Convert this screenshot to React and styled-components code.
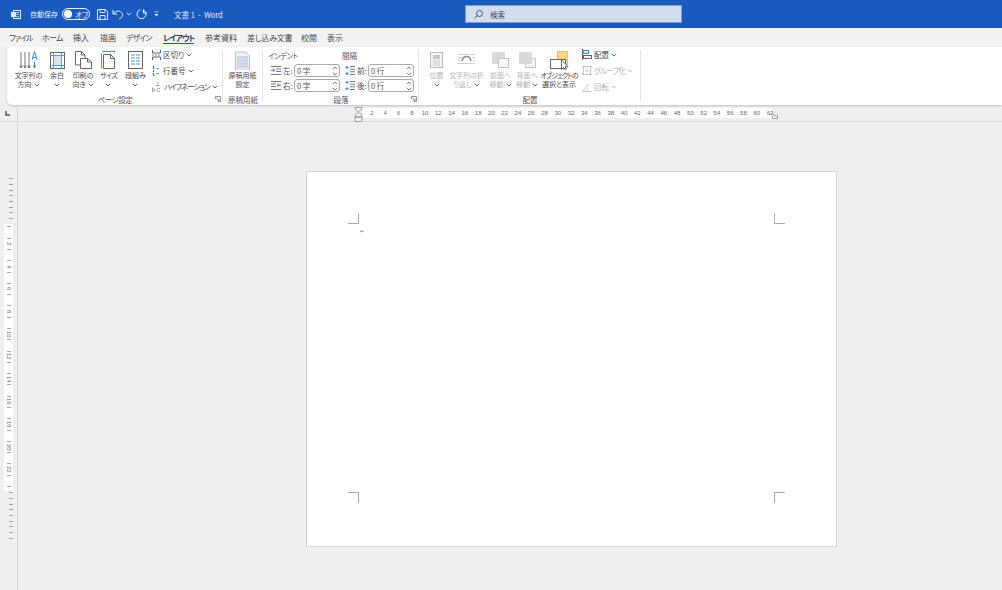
import React from "react";
import styled, { createGlobalStyle } from "styled-components";

const Global = createGlobalStyle`
  html, body { margin: 0; padding: 0; background: #efefef; }
  body {
    font-family: "Noto Sans CJK JP", "Noto Sans", sans-serif;
    font-feature-settings: "palt";
  }
  svg { display: block; }
`;

const BLUE = "#185abd";
const TABS = [
  { label: "ファイル", w: 22, ls: -1 },
  { label: "ホーム", w: 20, ls: -0.7 },
  { label: "挿入", w: 16 },
  { label: "描画", w: 15 },
  { label: "デザイン", w: 26, ls: -1 },
  { label: "レイアウト", w: 31, ls: -1, active: true },
  { label: "参考資料", w: 31 },
  { label: "差し込み文書", w: 43, ls: -0.2 },
  { label: "校閲", w: 15 },
  { label: "表示", w: 15 },
];

const Chev = ({ c = "#555" }) => (
  <svg width="6" height="4" viewBox="0 0 6 4">
    <path d="M.8.8 3 3l2.2-2.2" fill="none" stroke={c} strokeWidth=".9" />
  </svg>
);

const Ico = ({ w = 24, h = 22, children }) => (
  <svg width={w} height={h} viewBox={`0 0 ${w} ${h}`} fill="none">
    {children}
  </svg>
);

const icons = {
  direction: (
    <Ico w={19}>
      <path d="M2 4v16M.8 17.500 2 20l1.200-2.500M6 4v16M4.800 17.500 6 20l1.200-2.500M10 4v16M8.800 17.500 10 20l1.200-2.500" stroke="#666" strokeWidth=".9" />
      <path d="M13 12 15.500 3.500 18 12M14 9.500h3" stroke="#2b7cd3" strokeWidth=".9" />
      <path d="M15.500 13.500V20M14.300 17.500l1.200 2.500 1.200-2.500" stroke="#2b7cd3" strokeWidth=".9" />
    </Ico>
  ),
  margin: (
    <Ico w={15}>
      <rect x=".5" y="4.500" width="14" height="16" fill="#fff" stroke="#666" />
      <rect x="3.500" y="7.500" width="8" height="10" fill="#d4e6f7" />
      <path d="M3.500 4.500v16M11.500 4.500v16M.5 7.500h14M.5 17.500h14" stroke="#5a9fdb" />
    </Ico>
  ),
  orient: (
    <Ico w={17}>
      <path d="M.5 3.500h6l3.500 3.500v10H.5zM6.500 3.500V7H10" fill="#fff" stroke="#666" />
      <path d="M5.500 10.500h7l4 3.500v6.500h-11zM12.500 10.500V14h4" fill="#fff" stroke="#666" />
    </Ico>
  ),
  size: (
    <Ico w={15}>
      <path d="M2 3.500h12M2 2.500v2M13.500 2.500v2M.5 5.500v15" stroke="#4a94d8" />
      <path d="M2.500 6.500h7l4 4v10h-11zM9.500 6.500v4h4" fill="#fff" stroke="#666" />
    </Ico>
  ),
  columns: (
    <Ico w={15}>
      <rect x=".5" y="3.500" width="14" height="17" fill="#fff" stroke="#666" />
      <path d="M3 7h4M8 7h4M3 10h4M8 10h4M3 13h4M8 13h4M3 16h4M8 16h4" stroke="#8ab8e2" strokeWidth="1.500" />
    </Ico>
  ),
  sheet: (
    <Ico w={15}>
      <path d="M.5 4h10l4 4v14H.5z" fill="#eef3fa" stroke="#b6bfcd" />
      <rect x="2" y="8" width="11" height="12" fill="#c5d0e6" />
      <path d="M2 11h11M2 14h11M2 17h11M5 8v12M8 8v12M11 8v12" stroke="#eef3fa" strokeWidth=".5" />
    </Ico>
  ),
  position: (
    <Ico w={13}>
      <rect x=".5" y="4.500" width="12" height="15" fill="#f4f4f4" stroke="#bdbdbd" />
      <rect x="3" y="7" width="7" height="4" fill="#c6c6c6" />
      <path d="M3 13h7M3 15h7M3 17h7" stroke="#c9c9c9" />
    </Ico>
  ),
  wrap: (
    <Ico w={17}>
      <path d="M0 6.500h17M0 9.500h3M14 9.500h3M0 12.500h2M15 12.500h2M0 15.500h17" stroke="#d0d0d0" />
      <path d="M4 13c1-6 8-6 9 0" stroke="#8e8e8e" strokeWidth="1.500" />
    </Ico>
  ),
  front: (
    <Ico w={17}>
      <rect x=".5" y="4.500" width="12" height="11" fill="#d9d9d9" stroke="#d9d9d9" />
      <rect x="6.500" y="10.500" width="10" height="9" fill="#f7f7f7" stroke="#c4c4c4" />
    </Ico>
  ),
  back: (
    <Ico w={17}>
      <rect x="6.500" y="10.500" width="10" height="9" fill="#f7f7f7" stroke="#c4c4c4" />
      <rect x=".5" y="4.500" width="12" height="11" fill="#d9d9d9" stroke="#d9d9d9" />
    </Ico>
  ),
  selection: (
    <Ico w={22}>
      <rect x="9.500" y="3.500" width="10" height="13" fill="#fbd57f" stroke="#f0bf5a" />
      <rect x="2.500" y="11.500" width="15" height="9" fill="#fff" stroke="#666" />
      <path d="M13.500 12v9.500l2.200-2 1.600 2.500 1.300-.8-1.500-2.400h3z" fill="#fff" stroke="#444" strokeWidth=".8" />
    </Ico>
  ),
  breaks: (
    <Ico w={9} h={10}>
      <path d="M.5 0v3h8V0M.5 10V7h8v3" stroke="#666" />
      <path d="M0 5h9" stroke="#4a94d8" strokeDasharray="2 1" />
    </Ico>
  ),
  lines: (
    <Ico w={9} h={10}>
      <path d="M1.500 0v3M1.500 4v2M1.500 7v3" stroke="#2b7cd3" strokeWidth="1.200" />
      <path d="M4.500 2.500h2M4.500 7.500h2" stroke="#666" />
    </Ico>
  ),
  hyphen: (
    <Ico w={10} h={10}>
      <path d="M.5 9.500v-4M.5 7.500c1-1 2.500-.6 2.500 .6s-1.500 1.600-2.500 .6M8 6.500c-2-.7-3 .4-3 1.500s1.200 2 3 1.300M4 3.500h3.500M5 1h2" stroke="#888" strokeWidth=".8" />
    </Ico>
  ),
  align: (
    <Ico w={10} h={11}>
      <path d="M.5 0v11" stroke="#666" />
      <rect x="1.500" y="1.500" width="5" height="3" fill="#d4e6f7" stroke="#4a94d8" />
      <rect x="1.500" y="6.500" width="8" height="3" fill="#fff" stroke="#666" />
    </Ico>
  ),
  group: (
    <Ico w={10} h={11}>
      <rect x="1.500" y="1.500" width="7" height="8" stroke="#c4c4c4" />
      <rect x="3.500" y="3.500" width="3" height="4" fill="#e2e2e2" />
      <path d="M0 1.500h3M0 9.500h3M7 1.500h3M7 9.500h3" stroke="#bbb" />
    </Ico>
  ),
  rotate: (
    <Ico w={10} h={11}>
      <path d="M.5 10.500h9M.5 10.500 7 3" stroke="#c4c4c4" />
      <path d="M5 10c0-2 1-3 2-3" stroke="#d4d4d4" />
    </Ico>
  ),
  indentL: (
    <Ico w={10} h={9}>
      <path d="M0 .5h10M5 3h5M5 5.500h5M0 8.500h10" stroke="#777" />
      <path d="M0 4.200h3.500M2.200 2.800 3.800 4.200 2.200 5.600" stroke="#2b7cd3" />
    </Ico>
  ),
  indentR: (
    <Ico w={10} h={9}>
      <path d="M0 .5h10M0 3h5M0 5.500h5M0 8.500h10" stroke="#777" />
      <path d="M10 4.200H6.500M7.800 2.800 6.200 4.200 7.800 5.600" stroke="#2b7cd3" />
    </Ico>
  ),
  spacing: (
    <Ico w={10} h={9}>
      <path d="M5 .5h5M5 3.200h5M5 5.800h5M5 8.500h5" stroke="#777" />
      <path d="M2 .5v2.500M2 6v2.500M.5 2 2 .3 3.500 2M.5 7 2 8.700 3.500 7" stroke="#2b7cd3" />
    </Ico>
  ),
};

const Launcher = () => (
  <svg width="6" height="6" viewBox="0 0 6 6" fill="none">
    <path d="M.5 3V.5H5.500V5.500H3" stroke="#777" strokeWidth=".8" />
    <path d="M1 1.500 4 4.500M2.500 4.500H4V3" stroke="#777" strokeWidth=".8" />
  </svg>
);

const Root = styled.div`
  width: 1002px;
  height: 590px;
  overflow: hidden;
  display: flex;
  flex-direction: column;
  background: #efefef;
`;

const TitleBar = styled.header`
  height: 28px;
  flex: none;
  background: ${BLUE};
  color: #e8effa;
  display: flex;
  align-items: center;
  position: relative;
  font-size: 7px;
`;

const TitleItem = styled.div`
  flex: none;
  width: ${(p) => p.$w}px;
  margin-left: ${(p) => p.$ml || 0}px;
  display: flex;
  align-items: center;
  gap: 2px;
  white-space: pre;
  font-size: ${(p) => p.$size || 7}px;
`;

const Toggle = styled.div`
  width: 28px;
  height: 12px;
  box-sizing: border-box;
  border: 1px solid #e8effa;
  border-radius: 6px;
  display: flex;
  align-items: center;
  gap: 3px;
  padding-left: 1px;
  font-size: 7.5px;
  &::before {
    content: "";
    width: 8px;
    height: 8px;
    border-radius: 50%;
    background: #fff;
  }
`;

const Search = styled.div`
  position: absolute;
  left: 465px;
  top: 5px;
  width: 217px;
  height: 18px;
  box-sizing: border-box;
  background: #d2ddf0;
  border: 1px solid #7f9ccb;
  display: flex;
  align-items: center;
  padding-left: 8px;
  gap: 7px;
  color: #3f4c63;
  font-size: 7.5px;
`;

const TabBar = styled.nav`
  height: 19px;
  flex: none;
  background: #f3f3f3;
  display: flex;
  gap: 11px;
  padding-left: 9px;
  box-sizing: border-box;
`;

const Tab = styled.div`
  width: ${(p) => p.$w}px;
  height: 16px;
  line-height: 20px;
  white-space: nowrap;
  font-size: 8px;
  letter-spacing: ${(p) => p.$ls || 0}px;
  color: ${(p) => (p.$active ? "#2a3f63" : "#4a4a4a")};
  font-weight: ${(p) => (p.$active ? 700 : 400)};
  box-shadow: ${(p) => (p.$active ? `inset 0 -1px 0 ${BLUE}` : "none")};
`;

const Ribbon = styled.section`
  height: 58px;
  flex: none;
  margin-left: 7px;
  background: #fff;
  border-radius: 5px 0 0 5px;
  box-shadow: 0 1px 2px rgba(0, 0, 0, 0.2);
  display: flex;
  color: #555;
  font-size: 7px;
  line-height: 9px;
`;

const Group = styled.div`
  width: ${(p) => p.$w}px;
  flex: none;
  box-sizing: border-box;
  display: flex;
  flex-direction: column;
  position: relative;
  &::after {
    content: "";
    position: absolute;
    right: 0;
    top: 3px;
    bottom: 4px;
    width: 1px;
    background: #e2e2e2;
  }
`;

const GroupBody = styled.div`
  height: 47px;
  display: flex;
  padding-left: ${(p) => p.$pl || 0}px;
`;

const GroupLabel = styled.div`
  height: 11px;
  line-height: 11px;
  text-align: center;
  font-size: 7.5px;
  color: #555;
`;

const LauncherSlot = styled.div`
  position: absolute;
  right: 2px;
  bottom: 3px;
`;

const Big = styled.div`
  width: ${(p) => p.$w}px;
  flex: none;
  display: flex;
  flex-direction: column;
  align-items: center;
  text-align: center;
  white-space: nowrap;
  color: ${(p) => (p.$off ? "#b3b3b3" : "#4a4a4a")};
`;

const BigIcon = styled.div`
  height: 23px;
  margin-top: 1px;
  flex: none;
  display: flex;
  align-items: flex-start;
  justify-content: center;
`;

const BigText = styled.div`
  display: flex;
  flex-direction: column;
  align-items: center;
  font-size: 7px;
  line-height: 9px;
`;

const WithChev = styled.span`
  display: inline-flex;
  align-items: center;
  gap: 2px;
  height: 9px;
`;

const Kana = styled.span`
  letter-spacing: ${(p) => p.$ls || -0.8}px;
`;

const SmallCol = styled.div`
  display: flex;
  flex-direction: column;
  gap: 5px;
  padding-top: 2px;
  margin-left: ${(p) => p.$ml}px;
`;

const SmallRow = styled.div`
  display: flex;
  align-items: center;
  gap: 2px;
  height: 11px;
  white-space: nowrap;
  font-size: 7.5px;
  color: ${(p) => (p.$off ? "#b3b3b3" : "#4a4a4a")};
`;

const ParaBody = styled.div`
  height: 47px;
  padding: 3px 0 0 5px;
  box-sizing: border-box;
`;

const ParaHead = styled.div`
  display: grid;
  grid-template-columns: 74px 1fr;
  height: 11px;
  line-height: 11px;
  font-size: 7.5px;
`;

const ParaRows = styled.div`
  display: grid;
  grid-template-columns: 74px 74px;
  row-gap: 2px;
  margin-top: 3px;
  padding-left: 3px;
`;

const ParaField = styled.div`
  display: flex;
  align-items: center;
  height: 13px;
  font-size: 7.5px;
  gap: 1px;
  & > svg {
    margin-right: 1px;
  }
`;

const FieldCap = styled.span`
  width: 10px;
  flex: none;
  white-space: nowrap;
`;

const Spinner = styled.div`
  width: ${(p) => p.$w}px;
  height: 13px;
  flex: none;
  box-sizing: border-box;
  border: 1px solid #ababab;
  border-radius: 3px;
  display: flex;
  align-items: center;
  justify-content: space-between;
  padding: 0 1px 0 2px;
  font-size: 7.5px;
  color: #555;
`;

const SpinArrows = styled.div`
  display: flex;
  flex-direction: column;
  gap: 2px;
  & svg:first-child {
    transform: rotate(180deg);
  }
`;

const RulerBar = styled.div`
  height: 17px;
  flex: none;
  display: flex;
  box-sizing: border-box;
  border-bottom: 1px solid #dcdcdc;
  padding-top: 3px;
`;

const RulerCorner = styled.div`
  width: 18px;
  flex: none;
  margin-top: -3px;
  box-sizing: border-box;
  border-right: 1px solid #d8d8d8;
  display: flex;
  justify-content: center;
  padding: 6px 3px 0 0;
`;

const HRuler = styled.div`
  margin-left: 344px;
  width: 410px;
  height: 10px;
  box-sizing: border-box;
  background: #fff;
  display: flex;
  position: relative;
  font-family: "Liberation Sans", sans-serif;
  font-size: 6px;
  color: #666;
  padding-left: 3.400px;
`;

const HCell = styled.div`
  width: 13.27px;
  flex: none;
  display: flex;
  align-items: center;
  justify-content: center;
`;

const Marker = styled.div`
  position: absolute;
  left: ${(p) => p.$x}px;
  top: ${(p) => p.$y}px;
`;

const Workspace = styled.main`
  flex: 1;
  display: flex;
  min-height: 0;
`;

const VRuler = styled.aside`
  width: 18px;
  flex: none;
  box-sizing: border-box;
  border-right: 1px solid #d5d5d5;
  padding-top: 54px;
  display: flex;
  flex-direction: column;
`;

const VWhite = styled.div`
  margin-left: 4px;
  width: 9px;
  height: 267px;
  flex: none;
  background: #fff;
  margin-top: 3px;
  display: flex;
  flex-direction: column;
  margin-bottom: -1px;
`;

const VCell = styled.div`
  height: 5.65px;
  flex: none;
  display: flex;
  align-items: center;
  justify-content: center;
  padding-left: ${(p) => p.$pl || 0}px;
  font-family: "Liberation Sans", sans-serif;
  font-size: 6px;
  color: #666;
  &::before {
    content: "";
    display: ${(p) => (p.$tick ? "block" : "none")};
    width: 4px;
    height: 1px;
    background: #a3a3a3;
  }
`;

const VNum = styled.span`
  writing-mode: vertical-rl;
  line-height: 6px;
  white-space: nowrap;
`;

const Canvas = styled.div`
  flex: 1;
  padding: 49px 0 0 288px;
`;

const Page = styled.div`
  width: 531px;
  height: 376px;
  box-sizing: border-box;
  background: #fff;
  border: 1px solid #d4d4d4;
  position: relative;
`;

const Crop = styled.div`
  position: absolute;
  width: 11px;
  height: 11px;
  box-sizing: border-box;
  border-color: #a9a9a9;
  border-style: solid;
  border-width: 0;
  ${(p) => (p.$top ? "top: 41px; border-bottom-width: 1px;" : "top: 320px; border-top-width: 1px;")}
  ${(p) => (p.$left ? "left: 41px; border-right-width: 1px;" : "left: 467px; border-left-width: 1px;")}
`;

const ParaMark = styled.span`
  position: absolute;
  left: 53px;
  top: 56px;
  font-family: "DejaVu Sans", sans-serif;
  font-size: 5px;
  line-height: 6px;
  color: #666;
`;

const twoLine = (a, b) => (
  <BigText>
    <span>{a}</span>
    <WithChev>
      {b}
      <Chev />
    </WithChev>
  </BigText>
);

const Field = ({ icon, cap, value }) => (
  <ParaField>
    {icon}
    <FieldCap>{cap}</FieldCap>
    <Spinner $w={46}>
      <span>{value}</span>
      <SpinArrows>
        <Chev c="#777" />
        <Chev c="#777" />
      </SpinArrows>
    </Spinner>
  </ParaField>
);

const vCells = () => {
  const cells = [];
  for (let i = 1; i < 48; i++) {
    if (i % 4 === 0 && i / 2 <= 22) {
      cells.push(
        <VCell key={i}>
          <VNum>{i / 2}</VNum>
        </VCell>
      );
    } else {
      cells.push(<VCell key={i} $tick={i % 2 === 1} />);
    }
  }
  return cells;
};

export default function App() {
  const hNums = Array.from({ length: 31 }, (_, i) => (i + 1) * 2);
  return (
    <Root>
      <Global />
      <TitleBar>
        <TitleItem $w={19} $ml={11}>
          <svg width="10" height="9" viewBox="0 0 10 9" fill="none">
            <rect x="2.500" y=".5" width="7" height="8" stroke="#e8effa" />
            <path d="M5 2.500h3M5 4.500h3M5 6.500h3" stroke="#e8effa" strokeWidth=".7" />
            <rect x="0" y="2" width="5" height="5" fill="#e8effa" />
          </svg>
        </TitleItem>
        <TitleItem $w={32}>自動保存</TitleItem>
        <Toggle>オフ</Toggle>
        <TitleItem $w={12} $ml={7}>
          <svg width="11" height="11" viewBox="0 0 11 11" fill="none" stroke="#e8effa">
            <path d="M.5.500h8l2 2v8h-10zM3 .5v3h5v-3M3 10.500V6.500h5v4" strokeWidth=".9" />
          </svg>
        </TitleItem>
        <TitleItem $w={24} $ml={3}>
          <svg width="12" height="11" viewBox="0 0 12 11" fill="none" stroke="#e8effa">
            <path d="M1 1v4h4M1.500 5C3 2 7 1 9.500 3.500S10 9 7 10" />
          </svg>
          <Chev c="#e8effa" />
        </TitleItem>
        <TitleItem $w={18}>
          <svg width="11" height="11" viewBox="0 0 11 11" fill="none" stroke="#e8effa">
            <path d="M7.500 .5v3.500H11M7.800 1.200a4.500 4.500 0 1 1-3.300-.500" />
          </svg>
        </TitleItem>
        <TitleItem $w={20}>
          <svg width="5" height="6" viewBox="0 0 5 6" fill="#e8effa">
            <path d="M.5 .5h4v.8h-4zM.5 3h4L2.500 5.500z" />
          </svg>
        </TitleItem>
        <TitleItem $w={60} $size={7.5}>文書 1  -  Word</TitleItem>
        <Search>
          <svg width="9" height="9" viewBox="0 0 9 9" fill="none" stroke="#46556b">
            <circle cx="5.500" cy="3.500" r="3" />
            <path d="M3.500 5.500.5 8.500" />
          </svg>
          検索
        </Search>
      </TitleBar>

      <TabBar>
        {TABS.map((t) => (
          <Tab key={t.label} $w={t.w} $ls={t.ls} $active={t.active}>
            {t.label}
          </Tab>
        ))}
      </TabBar>

      <Ribbon>
        <Group $w={216}>
          <GroupBody $pl={7}>
            <Big $w={29}>
              <BigIcon>{icons.direction}</BigIcon>
              {twoLine("文字列の", "方向")}
            </Big>
            <Big $w={28}>
              <BigIcon>{icons.margin}</BigIcon>
              {twoLine("余白")}
            </Big>
            <Big $w={24}>
              <BigIcon>{icons.orient}</BigIcon>
              {twoLine("印刷の", "向き")}
            </Big>
            <Big $w={27}>
              <BigIcon>{icons.size}</BigIcon>
              {twoLine(<Kana>サイズ</Kana>)}
            </Big>
            <Big $w={27}>
              <BigIcon>{icons.columns}</BigIcon>
              {twoLine("段組み")}
            </Big>
            <SmallCol $ml={3}>
              <SmallRow>
                {icons.breaks}
                <WithChev>区切り<Chev /></WithChev>
              </SmallRow>
              <SmallRow>
                {icons.lines}
                <WithChev>行番号<Chev /></WithChev>
              </SmallRow>
              <SmallRow>
                {icons.hyphen}
                <WithChev><Kana $ls={-1}>ハイフネーション</Kana><Chev /></WithChev>
              </SmallRow>
            </SmallCol>
          </GroupBody>
          <GroupLabel><Kana $ls={-0.5}>ページ設定</Kana></GroupLabel>
          <LauncherSlot>
            <Launcher />
          </LauncherSlot>
        </Group>

        <Group $w={40}>
          <GroupBody>
            <Big $w={39}>
              <BigIcon>{icons.sheet}</BigIcon>
              <BigText>
                <span>原稿用紙</span>
                <span>設定</span>
              </BigText>
            </Big>
          </GroupBody>
          <GroupLabel>原稿用紙</GroupLabel>
        </Group>

        <Group $w={156}>
          <ParaBody>
            <ParaHead>
              <Kana $ls={-0.6}>インデント</Kana>
              <span>間隔</span>
            </ParaHead>
            <ParaRows>
              <Field icon={icons.indentL} cap="左:" value="0 字" />
              <Field icon={icons.spacing} cap="前:" value="0 行" />
              <Field icon={icons.indentR} cap="右:" value="0 字" />
              <Field icon={icons.spacing} cap="後:" value="0 行" />
            </ParaRows>
          </ParaBody>
          <GroupLabel>段落</GroupLabel>
          <LauncherSlot>
            <Launcher />
          </LauncherSlot>
        </Group>

        <Group $w={222}>
          <GroupBody $pl={8}>
            <Big $w={19} $off>
              <BigIcon>{icons.position}</BigIcon>
              {twoLine("位置")}
            </Big>
            <Big $w={41} $off>
              <BigIcon>{icons.wrap}</BigIcon>
              {twoLine("文字列の折", "り返し")}
            </Big>
            <Big $w={27} $off>
              <BigIcon>{icons.front}</BigIcon>
              {twoLine("前面へ", "移動")}
            </Big>
            <Big $w={26} $off>
              <BigIcon>{icons.back}</BigIcon>
              {twoLine("背面へ", "移動")}
            </Big>
            <Big $w={38}>
              <BigIcon>{icons.selection}</BigIcon>
              <BigText>
                <Kana $ls={-0.9}>オブジェクトの</Kana>
                <span>選択と表示</span>
              </BigText>
            </Big>
            <SmallCol $ml={4}>
              <SmallRow>
                {icons.align}
                <WithChev>配置<Chev /></WithChev>
              </SmallRow>
              <SmallRow $off>
                {icons.group}
                <WithChev><Kana>グループ化</Kana><Chev c="#bbb" /></WithChev>
              </SmallRow>
              <SmallRow $off>
                {icons.rotate}
                <WithChev>回転<Chev c="#bbb" /></WithChev>
              </SmallRow>
            </SmallCol>
          </GroupBody>
          <GroupLabel>配置</GroupLabel>
        </Group>
      </Ribbon>

      <RulerBar>
        <RulerCorner>
          <svg width="5" height="5" viewBox="0 0 5 5" fill="none" stroke="#555" strokeWidth="1.500">
            <path d="M1 0v4h4" />
          </svg>
        </RulerCorner>
        <HRuler>
          {hNums.map((n) => (
            <HCell key={n}>{n}</HCell>
          ))}
          <Marker $x={-8} $y={-1}>
            <svg width="9" height="15" viewBox="0 0 9 15" fill="#f3f3f3" stroke="#8a8a8a" strokeWidth=".8">
              <path d="M1 .5h7v1.500L4.500 4.800 1 2z" />
              <path d="M4.500 5.500 8 8v2H1V8zM1 10h7v4.500H1z" />
            </svg>
          </Marker>
          <Marker $x={408} $y={5}>
            <svg width="8" height="6" viewBox="0 0 8 6" fill="#f3f3f3" stroke="#8a8a8a" strokeWidth=".8">
              <path d="M.5 1 3 .5 5 3h2.500v2.500h-5V3z" />
            </svg>
          </Marker>
        </HRuler>
      </RulerBar>

      <Workspace>
        <VRuler>
          {Array.from({ length: 8 }, (_, i) => (
            <VCell key={i} $tick $pl={4} />
          ))}
          <VWhite>{vCells()}</VWhite>
          {Array.from({ length: 9 }, (_, i) => (
            <VCell key={i} $tick $pl={4} />
          ))}
        </VRuler>
        <Canvas>
          <Page>
            <Crop $top $left />
            <Crop $top />
            <Crop $left />
            <Crop />
            <ParaMark>↵</ParaMark>
          </Page>
        </Canvas>
      </Workspace>
    </Root>
  );
}
